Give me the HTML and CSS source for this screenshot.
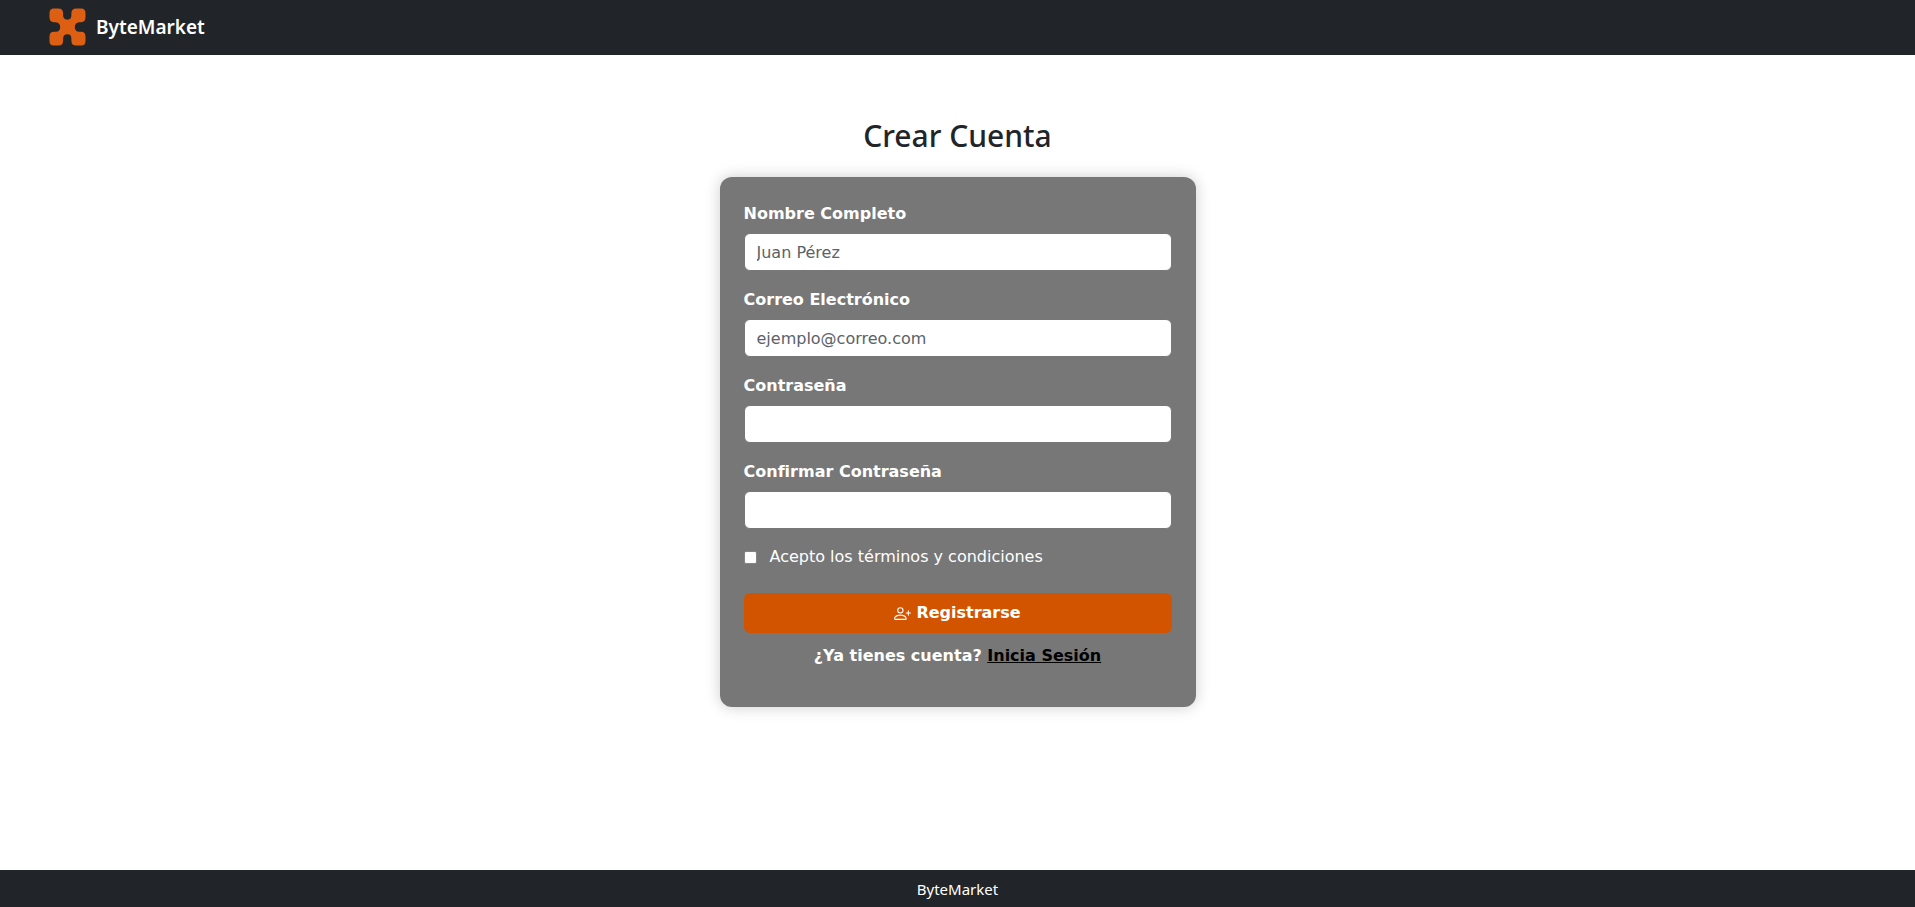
FILE: index.html
```
<!DOCTYPE html>
<html lang="es">
<head>
<meta charset="utf-8">
<meta name="viewport" content="width=device-width, initial-scale=1">
<title>ByteMarket</title>
<link rel="stylesheet" href="styles.css">
</head>
<body>
<header class="navbar">
  <a class="brand" href="#">
    <svg class="brand-logo" viewBox="0 0 38 38" aria-hidden="true">
      <path d="M5 0H9.500Q14.500 0 14.500 5V7Q14.500 11.500 19 11.500Q23 11.500 23 7V5Q23 0 28 0H33Q37.500 0 37.500 5V9Q37.500 14 33 14H31Q26.500 14.500 26.500 19Q26.500 23.500 31 24H33Q37.500 24 37.500 29V33Q37.500 38 33 38H28Q23 38 23 33V31Q23 26.500 19 26.500Q14.500 26.500 14.500 31V33Q14.500 38 9.500 38H5Q0.500 38 0.500 33V29Q0.500 24 5 24H7Q11.500 23.500 11.500 19Q11.500 14.500 7 14H5Q0.500 14 0.500 9V5Q0.500 0 5 0Z"/>
    </svg>
    <span>ByteMarket</span>
  </a>
</header>
<main class="page">
  <h1 class="title">Crear Cuenta</h1>
  <form class="card">
    <div class="field">
      <label for="nombre">Nombre Completo</label>
      <input id="nombre" type="text" placeholder="Juan Pérez">
    </div>
    <div class="field">
      <label for="correo">Correo Electrónico</label>
      <input id="correo" type="email" placeholder="ejemplo@correo.com">
    </div>
    <div class="field">
      <label for="clave">Contraseña</label>
      <input id="clave" type="password">
    </div>
    <div class="field">
      <label for="clave2">Confirmar Contraseña</label>
      <input id="clave2" type="password">
    </div>
    <div class="check">
      <input id="terminos" type="checkbox">
      <label for="terminos">Acepto los términos y condiciones</label>
    </div>
    <button class="submit" type="submit">
      <svg class="submit-icon" viewBox="0 0 16 16" aria-hidden="true">
        <path d="M6 8a3 3 0 1 0 0-6 3 3 0 0 0 0 6m2-3a2 2 0 1 1-4 0 2 2 0 0 1 4 0m4 8c0 1-1 1-1 1H1s-1 0-1-1 1-4 6-4 6 3 6 4m-1-.004c-.001-.246-.154-.986-.832-1.664C9.516 10.680 8.289 10 6 10s-3.516.680-4.168 1.332c-.678.678-.830 1.418-.832 1.664z"/>
        <path d="M13.500 5a.5.5 0 0 1 .5.5V7h1.500a.5.5 0 0 1 0 1H14v1.500a.5.5 0 0 1-1 0V8h-1.500a.5.5 0 0 1 0-1H13V5.500a.5.5 0 0 1 .5-.5"/>
      </svg>
      <span>Registrarse</span>
    </button>
    <p class="login">¿Ya tienes cuenta? <a href="#">Inicia Sesión</a></p>
  </form>
</main>
<footer class="footer">ByteMarket</footer>
</body>
</html>
```
FILE: styles.css
```
* {
  box-sizing: border-box;
}

body {
  margin: 0;
  min-height: 100vh;
  display: flex;
  flex-direction: column;
  background: #fff;
  color: #212529;
  font: 16px/24px "Segoe UI", "Noto Sans", sans-serif;
}

.navbar {
  padding: 8px 49px 9px;
  background: #212529;
}

.brand {
  display: inline-flex;
  align-items: center;
  gap: 10px;
  vertical-align: top;
  color: #fff;
  font-size: 19px;
  font-weight: 600;
  text-decoration: none;
}

.brand-logo {
  width: 37px;
  height: 38px;
  fill: #dc5f14;
}

.page {
  flex: 1;
  display: flex;
  flex-direction: column;
  align-items: center;
  gap: 22px;
  padding: 62px 16px;
}

.title {
  margin: 0;
  font-size: 30px;
  line-height: 38px;
  font-weight: 500;
}

.card {
  width: 100%;
  max-width: 476px;
  padding: 24px 24px 39px;
  border-radius: 12px;
  background: #777;
  box-shadow: 0 0 15px rgba(0, 0, 0, 0.2);
  color: #fff;
  font-family: Verdana, "DejaVu Sans", sans-serif;
}

.field {
  display: flex;
  flex-direction: column;
  gap: 6px;
  margin-bottom: 16px;
}

.field label {
  line-height: 26px;
  font-weight: 700;
}

.field input {
  height: 38px;
  padding: 6px 12px;
  border: 1px solid #777;
  border-radius: 6px;
  background: #fff;
  color: #212529;
  font: inherit;
}

.field input::placeholder {
  color: #5c6268;
  opacity: 1;
}

.check {
  display: flex;
  align-items: center;
  gap: 13px;
  margin-bottom: 24px;
}

.check input {
  appearance: none;
  width: 13px;
  height: 13px;
  margin: 0;
  border: 1px solid #858585;
  border-radius: 2px;
  background: #fff;
}

.submit {
  display: flex;
  align-items: center;
  justify-content: center;
  gap: 5px;
  width: 100%;
  padding: 8px;
  border: 0;
  border-radius: 6px;
  background: #d35400;
  color: #fff;
  font: inherit;
  font-weight: 700;
}

.submit-icon {
  width: 17px;
  height: 17px;
  fill: currentColor;
}

.login {
  margin: 11px 0 0;
  font-weight: 700;
  text-align: center;
}

.login a {
  color: #000;
}

.footer {
  padding: 9px 8px 7px;
  background: #212529;
  color: #fff;
  font-size: 15px;
  line-height: 21px;
  text-align: center;
}
```
